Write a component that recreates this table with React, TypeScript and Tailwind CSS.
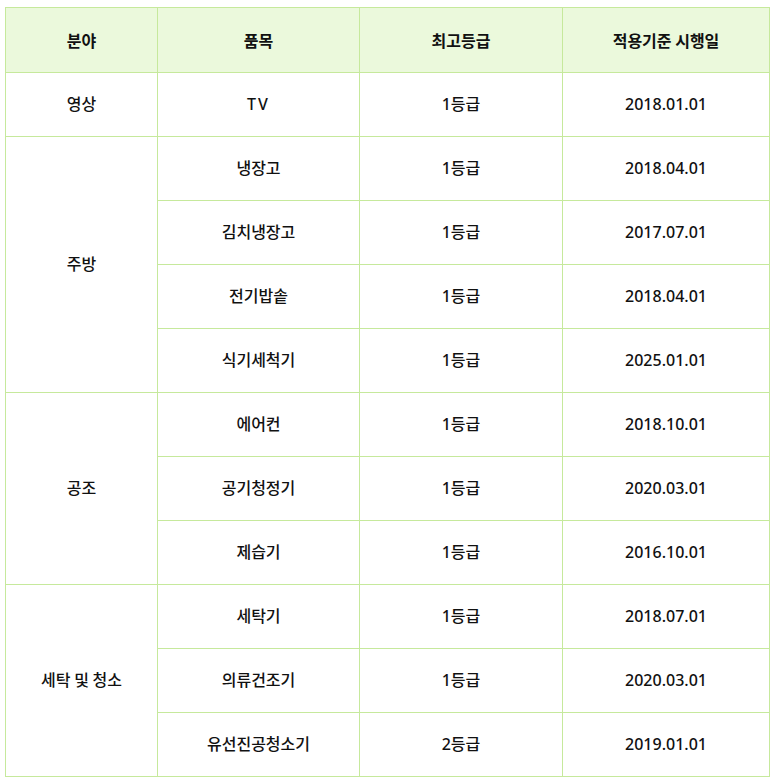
import React from "react";

const rows: { cat?: string; span?: number; item: string; grade: string; date: string }[] = [
  { cat: "영상", span: 1, item: "TV", grade: "1등급", date: "2018.01.01" },
  { cat: "주방", span: 4, item: "냉장고", grade: "1등급", date: "2018.04.01" },
  { item: "김치냉장고", grade: "1등급", date: "2017.07.01" },
  { item: "전기밥솥", grade: "1등급", date: "2018.04.01" },
  { item: "식기세척기", grade: "1등급", date: "2025.01.01" },
  { cat: "공조", span: 3, item: "에어컨", grade: "1등급", date: "2018.10.01" },
  { item: "공기청정기", grade: "1등급", date: "2020.03.01" },
  { item: "제습기", grade: "1등급", date: "2016.10.01" },
  { cat: "세탁 및 청소", span: 3, item: "세탁기", grade: "1등급", date: "2018.07.01" },
  { item: "의류건조기", grade: "1등급", date: "2020.03.01" },
  { item: "유선진공청소기", grade: "2등급", date: "2019.01.01" },
];

const cell = "border border-[#c6e99c] text-center align-middle p-0";
const body = "pb-[3px] leading-[20px]";
const latin = "font-['Noto_Sans',sans-serif]";

export default function App() {
  return (
    <div className="bg-white w-[772px] h-[782px] pt-[7px] pl-[5px]" style={{ fontFamily: '"Noto Sans CJK KR", sans-serif' }}>
      <table className="border-collapse table-fixed w-[764px] text-[16px] text-[#111]">
        <colgroup>
          <col className="w-[152px]" />
          <col className="w-[202px]" />
          <col className="w-[203px]" />
          <col className="w-[207px]" />
        </colgroup>
        <thead>
          <tr className="h-[65px] bg-[#ebf9dc]">
            <th className={`${cell} font-bold`}>분야</th>
            <th className={`${cell} font-bold`}>품목</th>
            <th className={`${cell} font-bold`}>최고등급</th>
            <th className={`${cell} font-bold`}>적용기준 시행일</th>
          </tr>
        </thead>
        <tbody>
          {rows.map((r, i) => (
            <tr key={i} className="h-[64px]">
              {r.cat && (
                <td rowSpan={r.span} className={`${cell} ${body} font-medium`}>
                  {r.cat}
                </td>
              )}
              <td className={`${cell} ${body} font-medium`}>
                {r.item === "TV" ? <span className={`${latin} tracking-[2px]`}>TV</span> : r.item}
              </td>
              <td className={`${cell} ${body} font-medium`}>
                <span className={latin}>{r.grade.slice(0, 1)}</span>
                {r.grade.slice(1)}
              </td>
              <td className={`${cell} ${body} font-medium`}>
                <span className={latin}>{r.date}</span>
              </td>
            </tr>
          ))}
        </tbody>
      </table>
    </div>
  );
}
